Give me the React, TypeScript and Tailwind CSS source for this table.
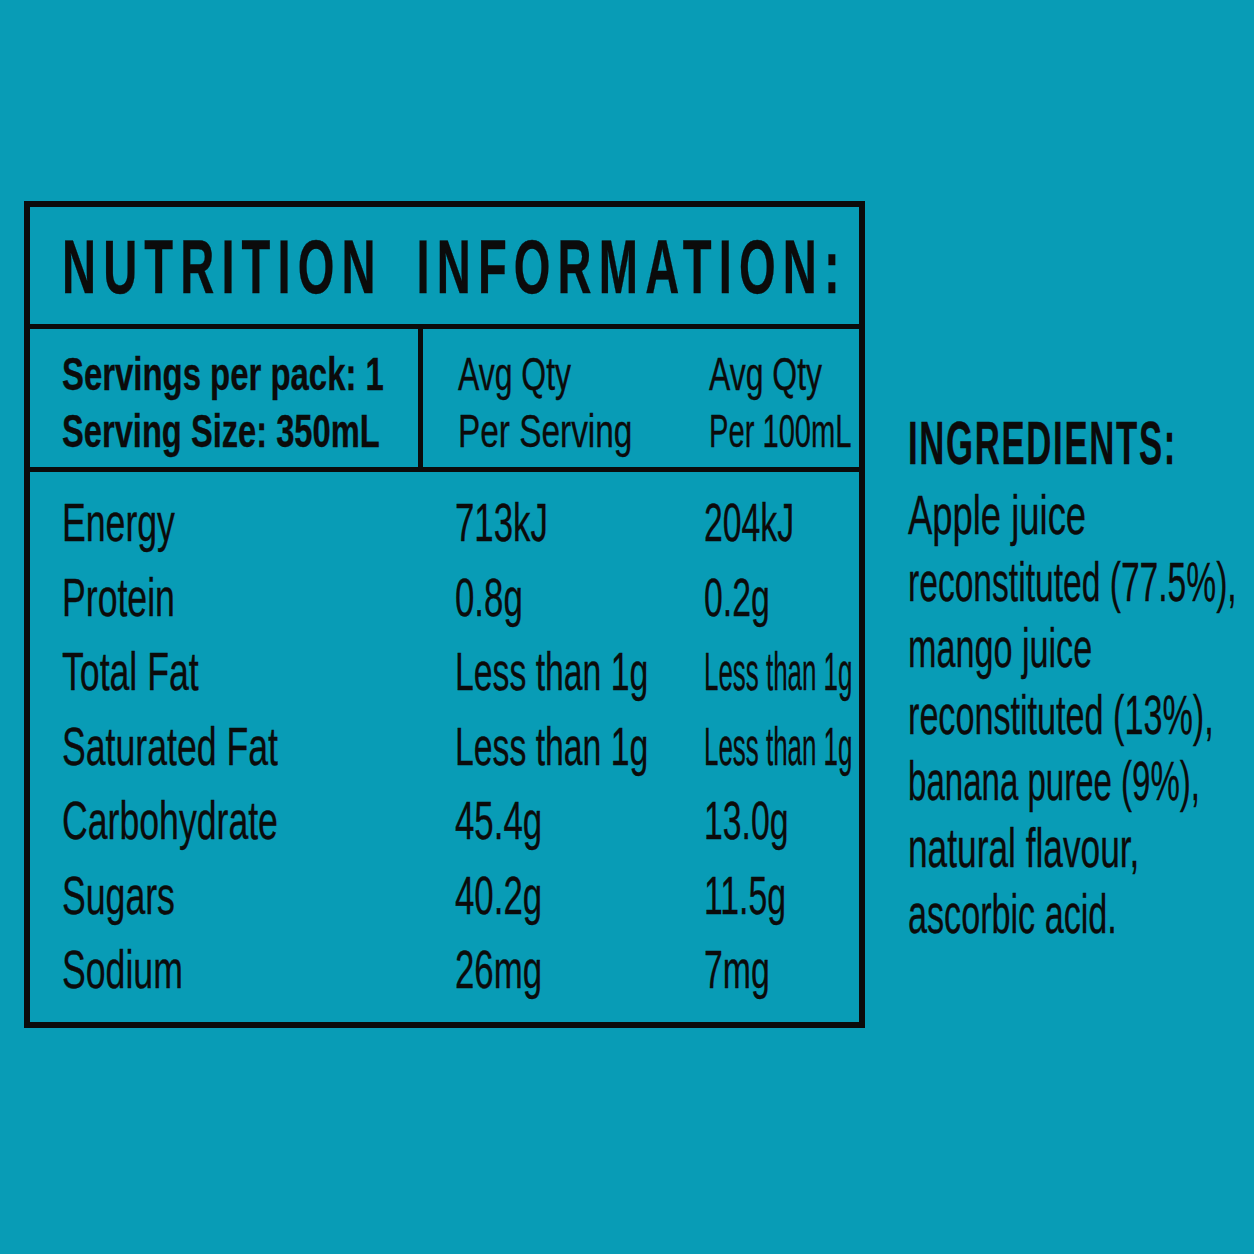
import React from "react";

const rows: { label: string; a: string; b: string; bNarrow?: boolean; aNarrow?: boolean }[] = [
  { label: "Energy", a: "713kJ", b: "204kJ" },
  { label: "Protein", a: "0.8g", b: "0.2g" },
  { label: "Total Fat", a: "Less than 1g", b: "Less than 1g", bNarrow: true, aNarrow: true },
  { label: "Saturated Fat", a: "Less than 1g", b: "Less than 1g", bNarrow: true, aNarrow: true },
  { label: "Carbohydrate", a: "45.4g", b: "13.0g" },
  { label: "Sugars", a: "40.2g", b: "11.5g" },
  { label: "Sodium", a: "26mg", b: "7mg" },
];

const ingredients: { text: string; cls: string }[] = [
  { text: "Apple juice", cls: "scale-x-[0.65]" },
  { text: "reconstituted (77.5%),", cls: "scale-x-[0.60]" },
  { text: "mango juice", cls: "scale-x-[0.61]" },
  { text: "reconstituted (13%),", cls: "scale-x-[0.61]" },
  { text: "banana puree (9%),", cls: "scale-x-[0.59]" },
  { text: "natural flavour,", cls: "scale-x-[0.63]" },
  { text: "ascorbic acid.", cls: "scale-x-[0.61]" },
];

export default function App() {
  return (
    <div className="w-[1254px] h-[1254px] overflow-hidden bg-[#089cb6] flex items-start pt-[201px] pl-[24px] font-['Liberation_Sans',Arial,sans-serif] text-[#0b0b0b] [-webkit-text-stroke:0.35px_#0b0b0b]">
      {/* Nutrition table */}
      <div className="w-[841px] h-[827px] border-[6px] border-[#0b0b0b] flex flex-col shrink-0 overflow-hidden">
        {/* Title */}
        <div className="h-[122px] border-b-[5px] border-[#0b0b0b] pl-[32px] pt-[22px] whitespace-nowrap">
          <span className="inline-block origin-left scale-x-[0.62] text-[76px] leading-none font-bold tracking-[11.5px] [word-spacing:22px]">
            NUTRITION INFORMATION:
          </span>
        </div>
        {/* Header */}
        <div className="h-[143px] border-b-[5px] border-[#0b0b0b] flex">
          <div className="w-[393px] shrink-0 border-r-[5px] border-[#0b0b0b] pl-[32px] pt-[16px] text-[47px] leading-[57px] font-bold overflow-hidden">
            <div className="whitespace-nowrap">
              <span className="inline-block origin-left scale-x-[0.70]">Servings per pack: 1</span>
            </div>
            <div className="whitespace-nowrap">
              <span className="inline-block origin-left scale-x-[0.695]">Serving Size: 350mL</span>
            </div>
          </div>
          <div className="flex-1 min-w-0 flex pl-[35px] pt-[16px] text-[47px] leading-[57px]">
            <div className="w-[251px] shrink-0 whitespace-nowrap">
              <div>
                <span className="inline-block origin-left scale-x-[0.68]">Avg Qty</span>
              </div>
              <div>
                <span className="inline-block origin-left scale-x-[0.71]">Per Serving</span>
              </div>
            </div>
            <div className="flex-1 min-w-0 whitespace-nowrap">
              <div>
                <span className="inline-block origin-left scale-x-[0.68]">Avg Qty</span>
              </div>
              <div>
                <span className="inline-block origin-left scale-x-[0.62]">Per 100mL</span>
              </div>
            </div>
          </div>
        </div>
        {/* Body */}
        <div className="flex-1 pl-[32px] pt-[13px] text-[54px] leading-[74.5px]">
          {rows.map((r) => (
            <div key={r.label} className="flex whitespace-nowrap">
              <div className="w-[393px] shrink-0">
                <span className="inline-block origin-left scale-x-[0.66]">{r.label}</span>
              </div>
              <div className="w-[249px] shrink-0">
                <span className={r.aNarrow ? "inline-block origin-left scale-x-[0.625]" : "inline-block origin-left scale-x-[0.645]"}>{r.a}</span>
              </div>
              <div className="flex-1 min-w-0">
                <span className={r.bNarrow ? "inline-block origin-left scale-x-[0.48]" : "inline-block origin-left scale-x-[0.625]"}>{r.b}</span>
              </div>
            </div>
          ))}
        </div>
      </div>

      {/* Ingredients */}
      <div className="ml-[43px] mt-[211px] whitespace-nowrap w-[300px] shrink-0">
        <div className="text-[62px] leading-none font-bold">
          <span className="inline-block origin-left scale-x-[0.56] tracking-[3px]">INGREDIENTS:</span>
        </div>
        <div className="mt-[8px] text-[56px] leading-[66.5px]">
          {ingredients.map((l) => (
            <div key={l.text}>
              <span className={"inline-block origin-left " + l.cls}>{l.text}</span>
            </div>
          ))}
        </div>
      </div>
    </div>
  );
}
